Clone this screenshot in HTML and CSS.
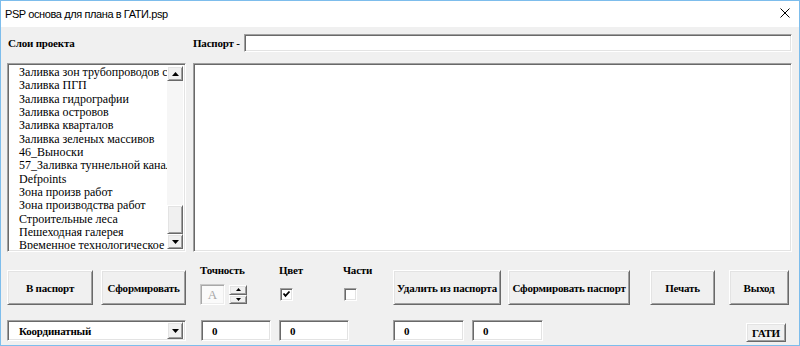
FILE: index.html
```html
<!DOCTYPE html>
<html>
<head>
<meta charset="utf-8">
<link rel="stylesheet" href="styles.css">
</head>
<body>
<div class="window">
  <div class="titlebar">
    <span class="title">PSP основа для плана в ГАТИ.psp</span>
    <svg class="close" width="10" height="10" viewBox="0 0 10 10"><path d="M0.5 0.5 L9.5 9.5 M9.5 0.5 L0.5 9.5" stroke="#000" stroke-width="1" fill="none"/></svg>
  </div>
  <div class="client">
    <div class="row-top">
      <div class="lbl lbl-layers">Слои проекта</div>
      <div class="lbl lbl-pass">Паспорт -</div>
      <div class="sunken pass-input"></div>
    </div>
    <div class="row-main">
      <div class="sunken listbox">
        <ul class="items">
          <li>Заливка зон трубопроводов сл</li>
          <li>Заливка ПГП</li>
          <li>Заливка гидрографии</li>
          <li>Заливка островов</li>
          <li>Заливка кварталов</li>
          <li>Заливка зеленых массивов</li>
          <li>46_Выноски</li>
          <li>57_Заливка туннельной канали</li>
          <li>Defpoints</li>
          <li>Зона произв работ</li>
          <li>Зона производства работ</li>
          <li>Строительные леса</li>
          <li>Пешеходная галерея</li>
          <li>Временное технологическое о</li>
        </ul>
        <div class="vscroll">
          <div class="raised sbtn"><svg width="7" height="4" viewBox="0 0 7 4"><polygon points="3.5,0 7,4 0,4" fill="#000"/></svg></div>
          <div class="track"></div>
          <div class="raised thumb"></div>
          <div class="raised sbtn"><svg width="7" height="4" viewBox="0 0 7 4"><polygon points="0,0 7,0 3.5,4" fill="#000"/></svg></div>
        </div>
      </div>
      <div class="sunken memo"></div>
    </div>
    <div class="row-buttons">
      <div class="raised btn btn-1">В паспорт</div>
      <div class="raised btn btn-2">Сформировать</div>
      <div class="group group-acc">
        <div class="lbl glabel">Точность</div>
        <div class="gctrl">
          <div class="sunken abox">A</div>
          <div class="spin">
            <div class="raised spinbtn"><svg width="5" height="3" viewBox="0 0 5 3"><polygon points="2.5,0 5,3 0,3" fill="#000"/></svg></div>
            <div class="raised spinbtn"><svg width="5" height="3" viewBox="0 0 5 3"><polygon points="0,0 5,0 2.5,3" fill="#000"/></svg></div>
          </div>
        </div>
      </div>
      <div class="group group-color">
        <div class="lbl glabel">Цвет</div>
        <div class="gctrl">
          <div class="sunken check"><svg width="9" height="9" viewBox="0 0 9 9"><polyline points="1.5,3.5 3.5,5.8 7.5,1.5" stroke="#000" stroke-width="1.8" fill="none"/></svg></div>
        </div>
      </div>
      <div class="group group-parts">
        <div class="lbl glabel">Части</div>
        <div class="gctrl">
          <div class="sunken check"></div>
        </div>
      </div>
      <div class="raised btn btn-3">Удалить из паспорта</div>
      <div class="raised btn btn-4">Сформировать паспорт</div>
      <div class="raised btn btn-5">Печать</div>
      <div class="raised btn btn-6">Выход</div>
    </div>
    <div class="row-bottom">
      <div class="sunken combo">
        <span class="combo-text">Координатный</span>
        <div class="raised combo-btn"><svg width="7" height="4" viewBox="0 0 7 4"><polygon points="0,0 7,0 3.5,4" fill="#000"/></svg></div>
      </div>
      <div class="sunken num num-1">0</div>
      <div class="sunken num num-2">0</div>
      <div class="sunken num num-3">0</div>
      <div class="sunken num num-4">0</div>
      <div class="raised btn gati">ГАТИ</div>
    </div>
  </div>
</div>
</body>
</html>
```
FILE: styles.css
```css
html, body {
  margin: 0;
  padding: 0;
  background: #fff;
}
.window {
  width: 800px;
  height: 346px;
  box-sizing: border-box;
  border: 1px solid #7dbdec;
  display: flex;
  flex-direction: column;
  background: #f0f0f0;
  overflow: hidden;
}
.titlebar {
  height: 26px;
  flex: none;
  background: #fff;
  display: flex;
  align-items: center;
  justify-content: space-between;
  padding: 0 9px 0 4px;
  font-family: "Liberation Sans", "Noto Sans", sans-serif;
  font-size: 11px;
  letter-spacing: -0.4px;
  color: #000;
}
.close {
  display: block;
  position: relative;
  top: -1px;
}
.client {
  flex: 1;
  padding-left: 6px;
}
.lbl {
  font-family: "Liberation Serif", "Times New Roman", serif;
  font-weight: bold;
  font-size: 11px;
  letter-spacing: -0.2px;
  color: #000;
  white-space: nowrap;
}
.sunken {
  box-sizing: border-box;
  background: #fff;
  border: 1px solid;
  border-color: #a0a0a0 #fff #fff #a0a0a0;
  box-shadow: inset 1px 1px 0 #696969, inset -1px -1px 0 #e3e3e3;
}
.raised {
  box-sizing: border-box;
  background: #f0f0f0;
  border: 1px solid;
  border-color: #fff #696969 #696969 #fff;
  box-shadow: inset 1px 1px 0 #e3e3e3, inset -1px -1px 0 #a0a0a0;
}
.row-top {
  margin-top: 7px;
  height: 18px;
  display: flex;
  align-items: center;
}
.lbl-layers {
  width: 186px;
  padding-left: 1px;
  box-sizing: border-box;
}
.lbl-pass {
  width: 51px;
}
.pass-input {
  width: 548px;
  height: 18px;
}
.row-main {
  margin-top: 11px;
  height: 189px;
  display: flex;
  gap: 7px;
}
.listbox {
  width: 179px;
  height: 189px;
  display: flex;
  padding: 2px;
}
.items {
  flex: 1;
  min-width: 0;
  margin: 0;
  padding: 0 0 0 9px;
  list-style: none;
  overflow: hidden;
  font-family: "Liberation Serif", "Times New Roman", serif;
  font-size: 12px;
  line-height: 13.33px;
  color: #000;
}
.items li {
  white-space: nowrap;
}
.vscroll {
  width: 16px;
  flex: none;
  display: flex;
  flex-direction: column;
}
.sbtn {
  height: 15px;
  flex: none;
  display: flex;
  align-items: center;
  justify-content: center;
}
.track {
  flex: 1;
  background: #f6f6f6;
}
.thumb {
  height: 29px;
  flex: none;
}
.memo {
  width: 599px;
  height: 189px;
}
.row-buttons {
  margin-top: 11px;
  height: 42px;
  display: flex;
  align-items: flex-end;
}
.btn {
  height: 35px;
  display: flex;
  align-items: center;
  justify-content: center;
  font-family: "Liberation Serif", "Times New Roman", serif;
  font-weight: bold;
  font-size: 11px;
  letter-spacing: -0.2px;
  color: #000;
  white-space: nowrap;
}
.btn-1 { width: 86px; }
.btn-2 { width: 85px; margin-left: 8px; }
.btn-3 { width: 108px; }
.btn-4 { width: 122px; margin-left: 7px; }
.btn-5 { width: 65px; margin-left: 20px; }
.btn-6 { width: 60px; margin-left: 14px; }
.group {
  align-self: stretch;
  display: flex;
  flex-direction: column;
}
.group-acc { width: 79px; margin-left: 14px; }
.group-color { width: 64px; }
.group-parts { width: 50px; }
.glabel {
  height: 14px;
  line-height: 14px;
}
.gctrl {
  margin-top: 7px;
  display: flex;
  align-items: flex-start;
}
.abox {
  width: 25px;
  height: 21px;
  display: flex;
  align-items: center;
  justify-content: center;
  background: #fafafa;
  border-color: #c8c8c8 #fff #fff #c8c8c8;
  box-shadow: inset 1px 1px 0 #a8a8a8, inset -1px -1px 0 #ececec;
  font-family: "Liberation Serif", "Times New Roman", serif;
  font-size: 13px;
  color: #a8a8a8;
}
.spin {
  margin-left: 4px;
  margin-top: 1px;
  width: 18px;
  height: 19px;
  display: flex;
  flex-direction: column;
}
.spinbtn {
  flex: 1;
  display: flex;
  align-items: center;
  justify-content: center;
}
.check {
  margin-left: 1px;
  margin-top: 4px;
  width: 13px;
  height: 13px;
  display: flex;
  align-items: center;
  justify-content: center;
}
.row-bottom {
  margin-top: 15px;
  height: 21px;
  display: flex;
  align-items: flex-start;
}
.combo {
  width: 179px;
  height: 21px;
  display: flex;
  align-items: center;
  padding: 2px;
}
.combo-text {
  flex: 1;
  padding-left: 9px;
  font-family: "Liberation Serif", "Times New Roman", serif;
  font-weight: bold;
  font-size: 11px;
  letter-spacing: -0.2px;
  color: #000;
}
.combo-btn {
  width: 16px;
  height: 17px;
  display: flex;
  align-items: center;
  justify-content: center;
}
.num {
  height: 21px;
  display: flex;
  align-items: center;
  padding-left: 10px;
  font-family: "Liberation Serif", "Times New Roman", serif;
  font-weight: bold;
  font-size: 11px;
  color: #000;
}
.num-1 { width: 70px; margin-left: 15px; }
.num-2 { width: 70px; margin-left: 8px; }
.num-3 { width: 71px; margin-left: 44px; }
.num-4 { width: 71px; margin-left: 8px; }
.gati {
  width: 40px;
  height: 19px;
  margin-left: 203px;
  margin-top: 3px;
}
```
